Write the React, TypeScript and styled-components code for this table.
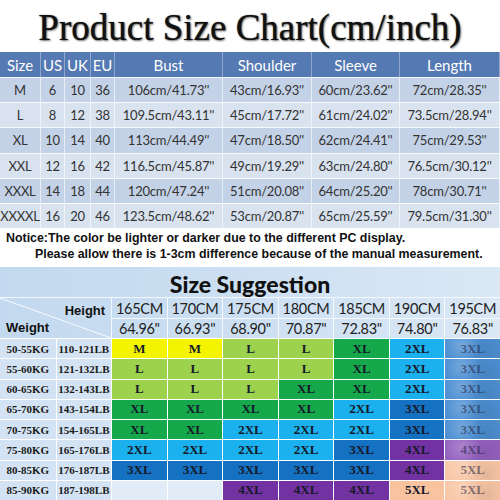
import * as React from 'react';
import styled, { createGlobalStyle } from 'styled-components';

const GlobalStyle = createGlobalStyle`
  body {
    margin: 0;
    background: #fff;
  }
  * {
    box-sizing: border-box;
  }
`;

const chartHead = ['Size', 'US', 'UK', 'EU', 'Bust', 'Shoulder', 'Sleeve', 'Length'];

const chartRows = [
  ['M', '6', '10', '36', "106cm/41.73''", "43cm/16.93''", "60cm/23.62''", "72cm/28.35''"],
  ['L', '8', '12', '38', "109.5cm/43.11''", "45cm/17.72''", "61cm/24.02''", "73.5cm/28.94''"],
  ['XL', '10', '14', '40', "113cm/44.49''", "47cm/18.50''", "62cm/24.41''", "75cm/29.53''"],
  ['XXL', '12', '16', '42', "116.5cm/45.87''", "49cm/19.29''", "63cm/24.80''", "76.5cm/30.12''"],
  ['XXXL', '14', '18', '44', "120cm/47.24''", "51cm/20.08''", "64cm/25.20''", "78cm/30.71''"],
  ['XXXXL', '16', '20', '46', "123.5cm/48.62''", "53cm/20.87''", "65cm/25.59''", "79.5cm/31.30''"],
];

const heights = [
  ['165CM', '64.96"'],
  ['170CM', '66.93"'],
  ['175CM', '68.90"'],
  ['180CM', '70.87"'],
  ['185CM', '72.83"'],
  ['190CM', '74.80"'],
  ['195CM', '76.83"'],
];

const suggestions: [string, string, string[]][] = [
  ['50-55KG', '110-121LB', ['M', 'M', 'L', 'L', 'XL', '2XL', '3XL']],
  ['55-60KG', '121-132LB', ['L', 'L', 'L', 'L', 'XL', '2XL', '3XL']],
  ['60-65KG', '132-143LB', ['L', 'L', 'L', 'XL', 'XL', '2XL', '3XL']],
  ['65-70KG', '143-154LB', ['XL', 'XL', 'XL', 'XL', '2XL', '3XL', '3XL']],
  ['70-75KG', '154-165LB', ['XL', 'XL', '2XL', '2XL', '2XL', '3XL', '3XL']],
  ['75-80KG', '165-176LB', ['2XL', '2XL', '2XL', '2XL', '3XL', '4XL', '4XL']],
  ['80-85KG', '176-187LB', ['3XL', '3XL', '3XL', '3XL', '3XL', '4XL', '5XL']],
  ['85-90KG', '187-198LB', ['', '', '4XL', '4XL', '4XL', '5XL', '5XL']],
];

const sizeColors: Record<string, string> = {
  M: '#f4f400',
  L: '#9dd24e',
  XL: '#16a94b',
  '2XL': '#1bb1ee',
  '3XL': '#1571c2',
  '4XL': '#7232a2',
  '5XL': '#f9c3a0',
  '': '#e1ecf7',
};

// the 195CM column is printed with a washed-out watercolour look
const fadedColors: Record<string, string> = {
  '3XL': '#4d8fd2',
  '4XL': '#9461bf',
  '5XL': '#f8c6a6',
};

const Page = styled.div`
  width: 500px;
  height: 500px;
  overflow: hidden;
  display: flex;
  flex-direction: column;
  background: #fff;
`;

const Title = styled.h1`
  margin: 0;
  height: 52px;
  padding-top: 9px;
  text-align: center;
  font-family: 'Liberation Serif', 'Times New Roman', serif;
  font-weight: 400;
  font-size: 37px;
  line-height: 37px;
  color: #111;
  text-shadow: 1px 1px 2px rgba(0, 0, 0, 0.55), 0 0 1px rgba(0, 0, 0, 0.6);
`;

const ChartGrid = styled.div`
  display: grid;
  grid-template-columns: 41px 24px 26px 24px 108px 89px 88px 100px;
  grid-template-rows: 25px repeat(6, 25.2px);
  font-family: Lato, 'Open Sans', sans-serif;
`;

const ChartHead = styled.div`
  display: flex;
  align-items: center;
  justify-content: center;
  background: #5479b3;
  color: #fff;
  font-size: 15px;
  border-right: 1px solid rgba(255, 255, 255, 0.35);
  white-space: nowrap;
`;

const ChartCell = styled.div<{ $shade: boolean }>`
  display: flex;
  align-items: center;
  justify-content: center;
  background: ${p => (p.$shade ? '#c4d2e7' : '#d9e2ef')};
  color: #333;
  font-size: 13px;
  letter-spacing: -0.2px;
  border-top: 1px solid rgba(255, 255, 255, 0.85);
  border-right: 1px solid rgba(255, 255, 255, 0.6);
  white-space: nowrap;
`;

const Notice = styled.div`
  height: 39px;
  padding: 2px 0 0 6px;
  font-family: 'Liberation Sans', Arial, sans-serif;
  font-weight: 700;
  font-size: 12.4px;
  line-height: 16px;
  color: #111;
  white-space: nowrap;
`;

const NoticeLine = styled.div<{ $indent?: number }>`
  padding-left: ${p => p.$indent || 0}px;
`;

const SuggestGrid = styled.div`
  flex: 1;
  display: grid;
  grid-template-columns: repeat(9, 1fr);
  grid-template-rows: 30px 21px 20px repeat(8, 1fr);
  background: linear-gradient(90deg, #c3d9ef 0%, #cfe1f3 60%, #dbe8f5 100%);
`;

const SuggestTitle = styled.div`
  grid-column: 1 / -1;
  display: flex;
  align-items: center;
  justify-content: center;
  padding-top: 4px;
  font-family: Lato, 'Open Sans', sans-serif;
  font-weight: 900;
  font-size: 23px;
  color: #111;
`;

const Corner = styled.div`
  grid-column: span 2;
  grid-row: span 2;
  display: flex;
  flex-direction: column;
  justify-content: space-between;
  padding: 5px 6px 3px 6px;
  border-top: 1px solid rgba(255, 255, 255, 0.8);
  background: linear-gradient(
    to top right,
    transparent calc(50% - 0.8px),
    #fff 50%,
    transparent calc(50% + 0.8px)
  );
  font-family: 'Liberation Sans', Arial, sans-serif;
  font-weight: 700;
  font-size: 13px;
  color: #111;
`;

const AxisLabel = styled.div<{ $side: 'left' | 'right' }>`
  text-align: ${p => p.$side};
`;

const HeightCell = styled.div`
  display: flex;
  align-items: center;
  justify-content: center;
  font-family: Lato, 'Open Sans', sans-serif;
  font-size: 14.5px;
  letter-spacing: -0.3px;
  color: #222;
  border-top: 1px solid rgba(255, 255, 255, 0.8);
  border-left: 1px solid rgba(255, 255, 255, 0.8);
  white-space: nowrap;
`;

const WeightCell = styled.div<{ $first?: boolean }>`
  display: flex;
  align-items: center;
  justify-content: center;
  background: #d3e3f3;
  font-family: 'Liberation Serif', 'Times New Roman', serif;
  font-weight: 700;
  font-size: 11px;
  color: #1a1a1a;
  border-top: 1px solid #fff;
  border-left: ${p => (p.$first ? 'none' : '1px solid #fff')};
  white-space: nowrap;
`;

const SizeCell = styled.div<{ $bg: string; $faded?: boolean }>`
  display: flex;
  align-items: center;
  justify-content: center;
  background: ${p =>
    p.$faded
      ? `radial-gradient(circle at 30% 35%, rgba(255,255,255,0.22), transparent 45%),
         radial-gradient(circle at 75% 70%, rgba(0,0,0,0.08), transparent 50%), ${p.$bg}`
      : p.$bg};
  font-family: 'Liberation Serif', 'Times New Roman', serif;
  font-weight: 700;
  font-size: 13px;
  color: ${p => (p.$faded ? 'rgba(30, 30, 60, 0.55)' : '#151a2a')};
  border-top: 1px solid #fff;
  border-left: 1px solid #fff;
`;

export default function App() {
  return (
    <Page>
      <GlobalStyle />
      <Title>Product Size Chart(cm/inch)</Title>
      <ChartGrid>
        {chartHead.map(h => (
          <ChartHead key={h}>{h}</ChartHead>
        ))}
        {chartRows.map((row, i) =>
          row.map((v, j) => (
            <ChartCell key={`${i}-${j}`} $shade={i % 2 === 0}>
              {v}
            </ChartCell>
          ))
        )}
      </ChartGrid>
      <Notice>
        <NoticeLine>Notice:The color be lighter or darker due to the different PC display.</NoticeLine>
        <NoticeLine $indent={29}>
          Please allow there is 1-3cm difference because of the manual measurement.
        </NoticeLine>
      </Notice>
      <SuggestGrid>
        <SuggestTitle>Size Suggestion</SuggestTitle>
        <Corner>
          <AxisLabel $side="right">Height</AxisLabel>
          <AxisLabel $side="left">Weight</AxisLabel>
        </Corner>
        {heights.map(h => (
          <HeightCell key={h[0]}>{h[0]}</HeightCell>
        ))}
        {heights.map(h => (
          <HeightCell key={h[1]}>{h[1]}</HeightCell>
        ))}
        {suggestions.map(([kg, lb, sizes]) => (
          <React.Fragment key={kg}>
            <WeightCell $first>{kg}</WeightCell>
            <WeightCell>{lb}</WeightCell>
            {sizes.map((s, i) => {
              const faded = i === 6 && !!fadedColors[s];
              return (
                <SizeCell key={i} $bg={faded ? fadedColors[s] : sizeColors[s]} $faded={faded}>
                  {s}
                </SizeCell>
              );
            })}
          </React.Fragment>
        ))}
      </SuggestGrid>
    </Page>
  );
}
